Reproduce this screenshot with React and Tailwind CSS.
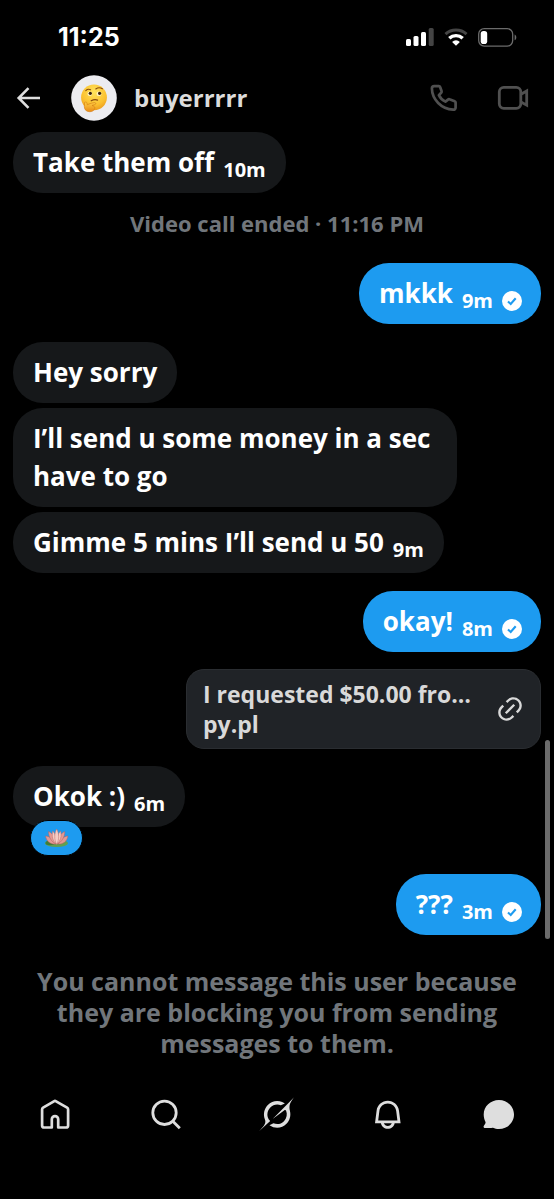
const VerifiedTick = () => (
  <svg viewBox="0 0 20 20" className="h-5 w-5 shrink-0" role="img" aria-label="Read">
    <circle cx="10" cy="10" r="10" fill="#fff" />
    <path d="M6 10.4l2.700 2.500 5-5.600" fill="none" stroke="#1d9bf0" strokeWidth="2.100" />
  </svg>
);

const ThinkingFace = () => (
  <svg viewBox="0 0 46 46" className="h-[46px] w-[46px] shrink-0" role="img" aria-label="buyerrrrr avatar">
    <defs>
      <radialGradient id="face" cx="0.5" cy="0.3" r="0.75">
        <stop offset="0" stopColor="#ffe45c" />
        <stop offset="0.65" stopColor="#fbc02f" />
        <stop offset="1" stopColor="#e8941a" />
      </radialGradient>
      <linearGradient id="hand" x1="0" y1="0" x2="0" y2="1">
        <stop offset="0" stopColor="#ffd047" />
        <stop offset="1" stopColor="#e98a14" />
      </linearGradient>
    </defs>
    <circle cx="23" cy="23" r="22.8" fill="#ececf0" />
    <g transform="translate(-0.600 0.400)">
      <circle cx="23.6" cy="22" r="12.9" fill="url(#face)" />
      <path d="M15.4 15.2q2-2 4.8-.9" fill="none" stroke="#8a4b0c" strokeWidth="1.1" strokeLinecap="round" />
      <path d="M25.4 13.6q3.200-2.400 6.600-.2" fill="none" stroke="#8a4b0c" strokeWidth="1.1" strokeLinecap="round" />
      <ellipse cx="19.400" cy="18.300" rx="2.300" ry="2.200" fill="#fff3c0" />
      <ellipse cx="28.600" cy="18.300" rx="2.500" ry="2.200" fill="#fff3c0" />
      <circle cx="19.900" cy="17.900" r="1.600" fill="#3b2009" />
      <circle cx="29.200" cy="17.900" r="1.600" fill="#3b2009" />
      <path d="M20.800 25.400q3.200-1.800 6.400-.7" fill="none" stroke="#8a4b0c" strokeWidth="1.200" strokeLinecap="round" />
      <path d="M14.200 27.300c.7-1.300 2.300-.9 2.400.7l.3 1.400c2.300-1.200 4.900-2 7.300-2.200 1.400 0 1.600 1.600.3 2l-2.900.9c2.100.4 3.200 1.700 2.700 3.100-.6 2.100-2.600 3.200-5.200 3.100-3.200 0-5.200-2.100-5.200-5.200z" fill="url(#hand)" stroke="#d27a12" strokeWidth="0.6" />
    </g>
  </svg>
);

const Lotus = () => (
  <svg viewBox="0 0 26 20" className="h-5 w-[26px]" role="img" aria-label="Lotus reaction">
    <ellipse cx="12.500" cy="15.300" rx="11.500" ry="3.800" fill="#5fa052" />
    <ellipse cx="6" cy="15" rx="4.500" ry="2.200" fill="#3d7d3c" />
    <g fill="#e39a95" stroke="#b5605f" strokeWidth="0.500">
      <path d="M1.500 8c4 .2 7.500 3 10 8-5 .5-9-2.500-10-8z" />
      <path d="M24 8c-4 .2-7.500 3-10 8 5 .5 9-2.500 10-8z" />
      <path d="M4.500 3.500C8.500 5 11.500 10 12 16 7.500 14 4.500 9 4.500 3.500z" />
      <path d="M20.800 3.500C17 5 13.500 10 13.300 16c4.500-2 7.500-7 7.500-12.500z" />
    </g>
    <g fill="#f5cdc5" stroke="#bd6867" strokeWidth="0.500">
      <path d="M8.800 3c2.700 3 4 8 3.600 13-3.600-3-5-8-3.600-13z" />
      <path d="M16.500 3c-2.700 3-4 8-3.600 13 3.600-3 5-8 3.600-13z" />
      <path d="M12.700 1c2.600 4.500 2.600 11 0 15.500-2.600-4.500-2.600-11 0-15.500z" />
    </g>
  </svg>
);

const Bubble = ({ text, time, mine }) => (
  <div
    className={
      mine
        ? "flex max-w-[84%] items-center gap-[9px] self-end rounded-[30px] bg-[#1d9bf0] pt-[11px] pr-[19px] pb-3 pl-5"
        : "flex max-w-[84%] items-center gap-[9px] self-start rounded-[30px] bg-[#16181a] px-5 pt-[11px] pb-3"
    }
  >
    <p className="text-[26px] leading-[38px] text-white">{text}</p>
    {time && <time className="pt-4 text-xl leading-[22px] text-white">{time}</time>}
    {mine && (
      <span className="pt-[15px]">
        <VerifiedTick />
      </span>
    )}
  </div>
);

const StatusBar = () => (
  <div className="flex items-center justify-between pt-[21px] pr-[37px] pl-[58px]">
    <time className="font-[Inter,sans-serif] text-[25px] leading-8 text-white">11:25</time>
    <div className="flex items-center gap-[10px]">
      <svg viewBox="0 0 28 18" className="h-[18px] w-7" role="img" aria-label="Signal">
        <rect x="0" y="11" width="5" height="7" rx="1.500" fill="#fff" />
        <rect x="7.500" y="8" width="5" height="10" rx="1.500" fill="#fff" />
        <rect x="15" y="4" width="5" height="14" rx="1.500" fill="#fff" />
        <rect x="22.700" y="0" width="5" height="18" rx="1.500" fill="#444" />
      </svg>
      <svg viewBox="0 0 24 18" className="h-[18px] w-6" role="img" aria-label="Wi-Fi" fill="none">
        <path d="M1.500 6.200a15.500 15.500 0 0 1 21 0" stroke="#444" strokeWidth="3" />
        <path d="M5.300 10.300a9.800 9.800 0 0 1 13.400 0" stroke="#fff" strokeWidth="3.400" />
        <path d="M12 17.800l-3.900-3.900a5.700 5.700 0 0 1 7.800 0z" fill="#fff" />
      </svg>
      <svg viewBox="0 0 39 19" className="h-[19px] w-[39px]" role="img" aria-label="Battery low">
        <rect x="0.700" y="0.700" width="34" height="17.400" rx="5.500" fill="none" stroke="#6b6b6b" strokeWidth="1.300" />
        <rect x="2.700" y="3" width="6.500" height="13" rx="2.800" fill="#fff" />
        <path d="M36.600 6.500c2.300.8 2.300 5 0 5.800z" fill="#6b6b6b" />
      </svg>
    </div>
  </div>
);

const Header = () => (
  <header className="flex items-center pt-[22px] pr-[25px] pl-4">
    <button type="button" aria-label="Back" className="text-[#dedede]">
      <svg viewBox="0 0 26 24" className="h-6 w-[26px]" fill="none" stroke="currentColor" strokeWidth="2.600">
        <path d="M24 12H3M12.500 2.200L2.700 12l9.800 9.800" />
      </svg>
    </button>
    <a href="#profile" className="ml-[29px] flex items-center gap-[17px]">
      <ThinkingFace />
      <h1 className="text-2xl leading-8 text-[#dcdcdc]">buyerrrrr</h1>
    </a>
    <div className="ml-auto flex items-center gap-[38px] text-[#505050]">
      <button type="button" aria-label="Audio call">
        <svg viewBox="0 0 30 30" className="h-[30px] w-[30px]" fill="none" stroke="currentColor" strokeWidth="2.700" strokeLinejoin="round">
          <path d="M5.200 3.200h4.600c.7 0 1.200.4 1.400 1l1.400 4c.2.600 0 1.100-.4 1.500l-2.300 2.400c1.300 2.800 3.600 5.100 6.500 6.500l2.600-2c.4-.400 1-.500 1.500-.300l5.200 1.900c.6.200.9.700.9 1.300v5c0 1.400-1 2.300-2.400 2.200C12.300 26 3.100 16.500 2.900 5.600c0-1.400.9-2.400 2.300-2.400z" />
        </svg>
      </button>
      <button type="button" aria-label="Video call">
        <svg viewBox="0 0 32 26" className="h-[26px] w-8" fill="none" stroke="currentColor" strokeWidth="2.800">
          <rect x="2.300" y="2.300" width="21.500" height="21" rx="4.500" />
          <path d="M24 9.200l5.700-3.200v14.200L24 17" />
        </svg>
      </button>
    </div>
  </header>
);

const NAV = [
  {
    label: "Home",
    icon: (
      <path d="M16.900 4.300L6.100 10.700a2 2 0 0 0-1 1.800v16a2 2 0 0 0 2 2h7.700v-8.200a3.200 3.200 0 0 1 6.400 0v8.200h7.900a2 2 0 0 0 2-2v-16a2 2 0 0 0-1-1.800L19.100 4.300a2.200 2.200 0 0 0-2.200 0z" fill="none" stroke="currentColor" strokeWidth="2.700" strokeLinejoin="round" />
    ),
  },
  {
    label: "Search",
    icon: (
      <g fill="none" stroke="currentColor" strokeWidth="2.800">
        <circle cx="16.500" cy="15.800" r="11.700" />
        <path d="M24.600 24l7.200 7.200" />
      </g>
    ),
  },
  {
    label: "Grok",
    icon: (
      <path transform="translate(0 0) scale(1.070)" fill="currentColor" d="M12.745 20.540l10.970-8.190c.539-.4 1.307-.244 1.564.380 1.349 3.288.746 7.241-1.938 9.955-2.683 2.714-6.417 3.310-9.830 1.954l-3.728 1.745c5.347 3.697 11.840 2.782 15.898-1.324 3.219-3.255 4.216-7.692 3.284-11.693l.008.009c-1.351-5.878.332-8.227 3.782-13.031L33 0l-4.540 4.590v-.014L12.743 20.544m-2.263 1.987c-3.837-3.707-3.175-9.446.1-12.755 2.420-2.449 6.388-3.448 9.852-1.979l3.720-1.737c-.67-.49-1.530-1.017-2.515-1.387-4.455-1.854-9.789-.931-13.410 2.728-3.483 3.523-4.579 8.940-2.697 13.561 1.405 3.454-.899 5.898-3.220 8.364C1.490 30.200.666 31.074 0 32l10.478-9.466" />
    ),
  },
  {
    label: "Notifications",
    icon: (
      <path transform="translate(1 1) scale(1.400)" fill="currentColor" d="M19.993 9.042C19.480 5.017 16.054 2 11.996 2s-7.490 3.021-7.999 7.051L2.866 18H7.100c.463 2.282 2.481 4 4.900 4s4.437-1.718 4.900-4h4.236l-1.143-8.958zM12 20c-1.306 0-2.417-.835-2.829-2h5.658c-.412 1.165-1.523 2-2.829 2zm-6.866-4l.847-6.698C6.364 6.272 8.941 4 11.996 4s5.627 2.268 6.013 5.295L18.864 16H5.134z" />
    ),
  },
  {
    label: "Messages",
    icon: (
      <path fill="currentColor" d="M17.900 3C9.500 3 2.700 9.400 2.700 17.500c0 3 .8 5.300 1.700 7.300.3.700.2 1.300-.2 1.900l-1.300 2c-.8 1.300-.1 2.400 1.400 2.400h4.500c1.100 0 2.200-.4 3.200-.3 1.800.8 3.700 1.300 5.900 1.300 8.400 0 15.100-6.400 15.100-14.500S26.300 3 17.900 3z" />
    ),
  },
];

export default function App() {
  return (
    <div className="flex min-h-screen flex-col bg-black font-['Open_Sans',sans-serif] font-bold">
      <StatusBar />
      <Header />
      <main className="relative flex flex-col px-[13px] pt-[11px]">
        <Bubble text="Take them off" time="10m" />
        <p className="mt-[15px] mb-4 text-center text-[22px] leading-[31px] text-[#71767b]">
          Video call ended · 11:16 PM
        </p>
        <div className="mt-2 flex flex-col">
          <Bubble text="mkkk" time="9m" mine />
        </div>
        <div className="mt-[18px] flex flex-col gap-[5px]">
          <Bubble text="Hey sorry" />
          <Bubble text="I’ll send u some money in a sec have to go" />
          <Bubble text="Gimme 5 mins I’ll send u 50" time="9m" />
        </div>
        <div className="mt-[18px] flex flex-col gap-[17px]">
          <Bubble text="okay!" time="8m" mine />
          <a
            href="#payment"
            className="flex w-[355px] max-w-full items-center justify-between self-end rounded-[18px] border border-[#2a2d31] bg-[#202327] py-[9px] pr-[18px] pl-4 text-[23px] leading-[30px] text-[#d9d9d9]"
          >
            <span className="flex flex-col">
              <span className="whitespace-nowrap">I requested $50.00 fro…</span>
              <span>py.pl</span>
            </span>
            <svg viewBox="2 2 20 20" className="h-6 w-6 shrink-0" fill="currentColor" aria-hidden="true">
              <path d="M18.360 5.640c-1.950-1.960-5.110-1.960-7.070 0L9.880 7.050 8.460 5.640l1.420-1.420c2.730-2.730 7.160-2.730 9.900 0 2.730 2.740 2.730 7.170 0 9.900l-1.420 1.420-1.410-1.420 1.410-1.410c1.960-1.960 1.960-5.120 0-7.070zm-2.120 3.530l-7.070 7.070-1.410-1.410 7.070-7.070 1.410 1.410zm-12.020.71l1.420-1.420 1.410 1.420-1.410 1.410c-1.960 1.960-1.960 5.120 0 7.070 1.950 1.960 5.110 1.960 7.070 0l1.410-1.410 1.420 1.410-1.420 1.420c-2.730 2.730-7.160 2.730-9.900 0-2.730-2.740-2.730-7.170 0-9.900z" />
            </svg>
          </a>
        </div>
        <div className="relative mt-[17px] flex flex-col">
          <Bubble text="Okok :)" time="6m" />
          <button
            type="button"
            className="absolute -bottom-[29px] left-[17px] flex h-9 w-[53px] items-center justify-center rounded-full border border-black bg-[#1d9bf0]"
          >
            <Lotus />
          </button>
        </div>
        <div className="mt-[47px] flex flex-col">
          <Bubble text="???" time="3m" mine />
        </div>
        <div className="absolute right-1 -bottom-1 h-[199px] w-[5px] rounded-full bg-[#6b6b6b]" />
      </main>
      <p className="mt-[31px] px-8 text-center text-[25px] leading-[31px] text-[#71767b]">
        You cannot message this user because they are blocking you from sending messages to them.
      </p>
      <nav className="mt-[38px] grid grid-cols-5 pb-16 text-[#dedede]">
        {NAV.map((item) => (
          <a key={item.label} href={"#" + item.label.toLowerCase()} aria-label={item.label} className="flex justify-center">
            <svg viewBox="0 0 36 36" className="h-9 w-9" aria-hidden="true">
              {item.icon}
            </svg>
          </a>
        ))}
      </nav>
    </div>
  );
}
